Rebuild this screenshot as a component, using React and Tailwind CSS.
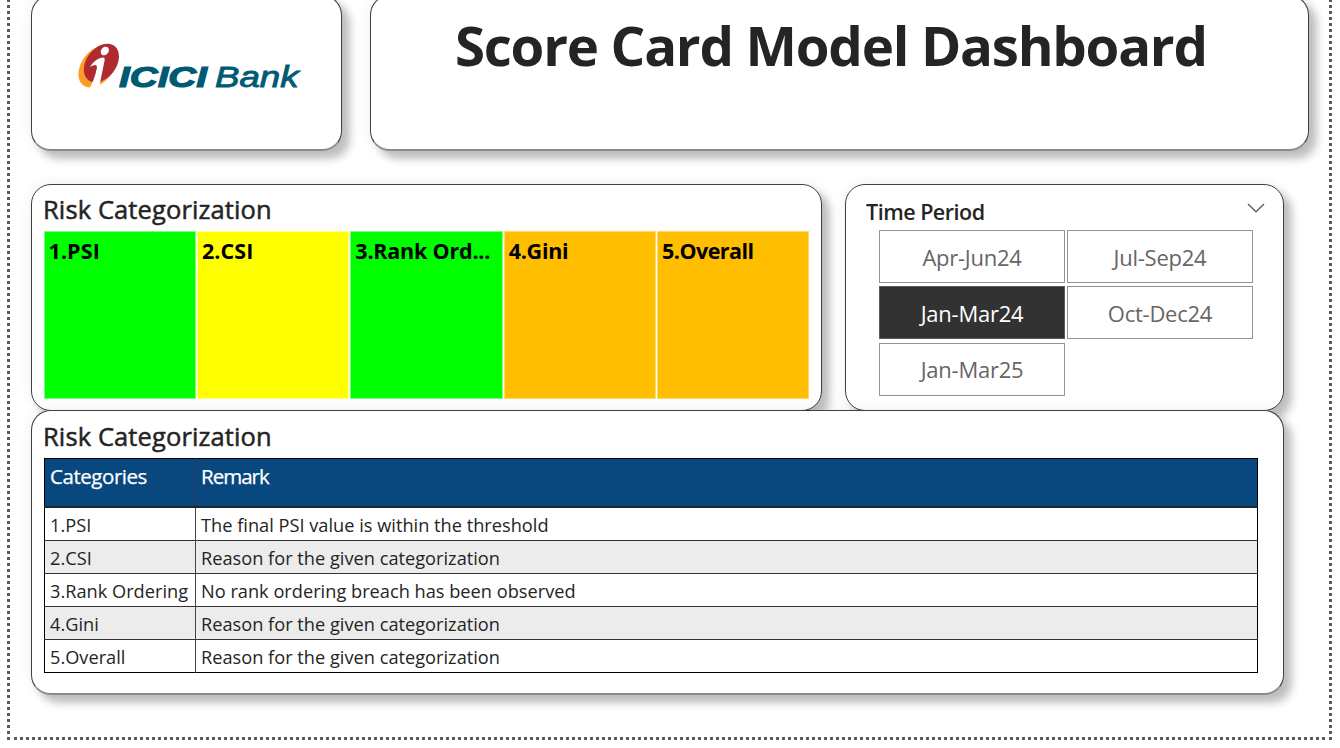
const CARD =
  'box-border rounded-[20px] border border-[#3f3f3f] bg-white shadow-[8px_8px_9px_rgba(0,0,0,0.24),0_0_14px_rgba(0,0,0,0.07)]';

const TILES = [
  { label: '1.PSI', tone: 'bg-[#00ff00] border-[#7dff7d]', spacing: 'tracking-[0.1px]' },
  { label: '2.CSI', tone: 'bg-[#ffff00] border-[#ffff8c]', spacing: 'tracking-[0.1px]' },
  { label: '3.Rank Ord...', tone: 'bg-[#00ff00] border-[#7dff7d]', spacing: 'tracking-[-0.2px]' },
  { label: '4.Gini', tone: 'bg-[#ffbf00] border-[#ffd966]', spacing: 'tracking-[-0.25px]' },
  { label: '5.Overall', tone: 'bg-[#ffbf00] border-[#ffd966]', spacing: 'tracking-[-0.55px]' },
];

const PERIODS = ['Apr-Jun24', 'Jul-Sep24', 'Jan-Mar24', 'Oct-Dec24', 'Jan-Mar25'];

const ROWS = [
  ['1.PSI', 'The final PSI value is within the threshold'],
  ['2.CSI', 'Reason for the given categorization'],
  ['3.Rank Ordering', 'No rank ordering breach has been observed'],
  ['4.Gini', 'Reason for the given categorization'],
  ['5.Overall', 'Reason for the given categorization'],
];

function Logo() {
  return (
    <svg width="228" height="52" viewBox="76 40 228 52" className="block">
      <ellipse cx="0" cy="0" rx="15.800" ry="23.800" transform="translate(97.500 66.300) rotate(37)" fill="#fb9d27" />
      <ellipse cx="0" cy="0" rx="14.900" ry="21.500" transform="translate(101.400 63) rotate(37)" fill="#b02a30" />
      <path d="M89.800 67 Q96 58 103 57.600 Q105.200 57.600 104.600 60.500 L100.200 82 L99.600 90 L88 91 Q94.500 80 96.800 68.500 Q97.300 65.200 95.500 65 Q93 65 89.800 67Z" fill="#fff" />
      <ellipse cx="0" cy="0" rx="3.700" ry="4.700" transform="translate(104.800 51) rotate(38)" fill="#fff" />
      <text x="119" y="87.400" textLength="88" lengthAdjust="spacingAndGlyphs" fontSize="30" fontWeight="700" fontStyle="italic" fill="#005a74" stroke="#005a74" strokeWidth="1.200" className="font-['Liberation_Sans',sans-serif]">ICICI</text>
      <text x="215" y="87.400" textLength="83.500" lengthAdjust="spacingAndGlyphs" fontSize="30" fontStyle="italic" fill="#005a74" stroke="#005a74" strokeWidth="0.900" className="font-['Liberation_Sans',sans-serif]">Bank</text>
    </svg>
  );
}

function DottedColumn() {
  return (
    <div className="h-[740px] w-[3px] shrink-0 bg-[repeating-linear-gradient(to_bottom,#5c5c5c_0,#5c5c5c_2px,transparent_2px,transparent_5px,#5c5c5c_5px,#5c5c5c_6px)]" />
  );
}

function Heading({ children, inset = 'pt-[7px]' }) {
  return (
    <h2 className={`h-[46px] pl-[11px] ${inset} text-[25.5px] leading-[36px] tracking-[0.11px] whitespace-nowrap text-[#252423] [-webkit-text-stroke:0.5px_#252423]`}>
      {children}
    </h2>
  );
}

export default function App() {
  return (
    <div className="h-[748px] w-[1340px] overflow-hidden bg-white pl-[7px] font-['Open_Sans','Noto_Sans',sans-serif]">
      <div className="flex h-[737px] w-[1325px]">
        <DottedColumn />
        <main className="-mt-[5px] w-[1319px] pl-[21px]">
          <div className="flex gap-[28px]">
            <section className={`${CARD} h-[156px] w-[311px] border-b-2 border-b-[#8c8c8c] pt-[44px] pl-[44px]`}>
              <Logo />
            </section>
            <section className={`${CARD} h-[156px] w-[939px] border-b-2 border-b-[#8c8c8c] pt-[9px] pl-[84px]`}>
              <h1 className="text-[54.6px] leading-[80px] font-bold tracking-[-1.26px] whitespace-nowrap text-[#252423]">
                Score Card Model Dashboard
              </h1>
            </section>
          </div>

          <div className="mt-[33px] flex gap-[23px]">
            <section className={`${CARD} h-[227px] w-[791px]`}>
              <Heading inset="pt-[6px]">Risk Categorization</Heading>
              <div className="ml-[11.5px] grid h-[168px] w-[766px] grid-cols-5 gap-px">
                {TILES.map((t) => (
                  <div
                    key={t.label}
                    className={`${t.tone} ${t.spacing} overflow-hidden border pt-[4px] pl-[4px] text-[21.5px] leading-[30px] font-bold whitespace-nowrap text-black`}
                  >
                    {t.label}
                  </div>
                ))}
              </div>
            </section>

            <section className={`${CARD} h-[227px] w-[439px]`}>
              <div className="flex h-[45px] justify-between pr-[18px] pl-[20px]">
                <h2 className="pt-[12px] text-[21.5px] leading-[30px] font-semibold tracking-[-0.5px] whitespace-nowrap text-[#252423]">
                  Time Period
                </h2>
                <svg width="18" height="12" viewBox="0 0 18 12" className="mt-[18px]" fill="none" stroke="#605e5c" strokeWidth="1.3">
                  <path d="M1 1 L9 8.800 L17 1" />
                </svg>
              </div>
              <div className="ml-[33px] grid w-[374px] grid-cols-2 gap-x-[2px] gap-y-[3.4px]">
                {PERIODS.map((p) => (
                  <button
                    key={p}
                    className={`h-[53px] border text-[22px] leading-[30px] tracking-[-0.25px] whitespace-nowrap ${
                      p === 'Jan-Mar24' ? 'border-[#5a5a5a] bg-[#323232] text-white' : 'border-[#939393] bg-white text-[#666666]'
                    }`}
                  >
                    {p}
                  </button>
                ))}
              </div>
            </section>
          </div>

          <section className={`${CARD} relative -mt-px h-[285px] w-[1253px] border-b-2 border-b-[#8c8c8c]`}>
            <Heading>Risk Categorization</Heading>
            <table className="mt-px ml-[12px] w-[1214px] table-fixed border-collapse border border-black text-left text-[#252423]">
              <colgroup>
                <col className="w-[151px]" />
                <col />
              </colgroup>
              <thead>
                <tr className="h-[48px] border-b-2 border-b-[#1b2733] bg-[#09477f] text-[20.5px] leading-[28px] text-white [-webkit-text-stroke:0.25px_#ffffff]">
                  <th className="border-r border-r-[#2b3d50] pt-[3px] pl-[5px] align-top font-normal tracking-[-0.45px]">Categories</th>
                  <th className="pt-[3px] pl-[5px] align-top font-normal tracking-[-1px]">Remark</th>
                </tr>
              </thead>
              <tbody>
                {ROWS.map(([category, remark]) => (
                  <tr key={category} className="h-[33px] border-b border-b-[#333333] text-[18.2px] leading-[26px] tracking-[0.01px] whitespace-nowrap first:h-[34px] last:border-b-black even:bg-[#ececec]">
                    <td className="border-r border-r-[#444444] pt-[2px] pl-[5px]">{category}</td>
                    <td className="pt-[2px] pl-[5px]">{remark}</td>
                  </tr>
                ))}
              </tbody>
            </table>
          </section>
        </main>
        <DottedColumn />
      </div>
      <div className="flex h-[3px] w-[1325px]">
        <div className="w-[3px] bg-[#5c5c5c]" />
        <div className="ml-[4px] w-[1311px] bg-[repeating-linear-gradient(to_right,#5c5c5c_0,#5c5c5c_3px,transparent_3px,transparent_6px)]" />
        <div className="ml-[4px] w-[3px] bg-[#5c5c5c]" />
      </div>
    </div>
  );
}
